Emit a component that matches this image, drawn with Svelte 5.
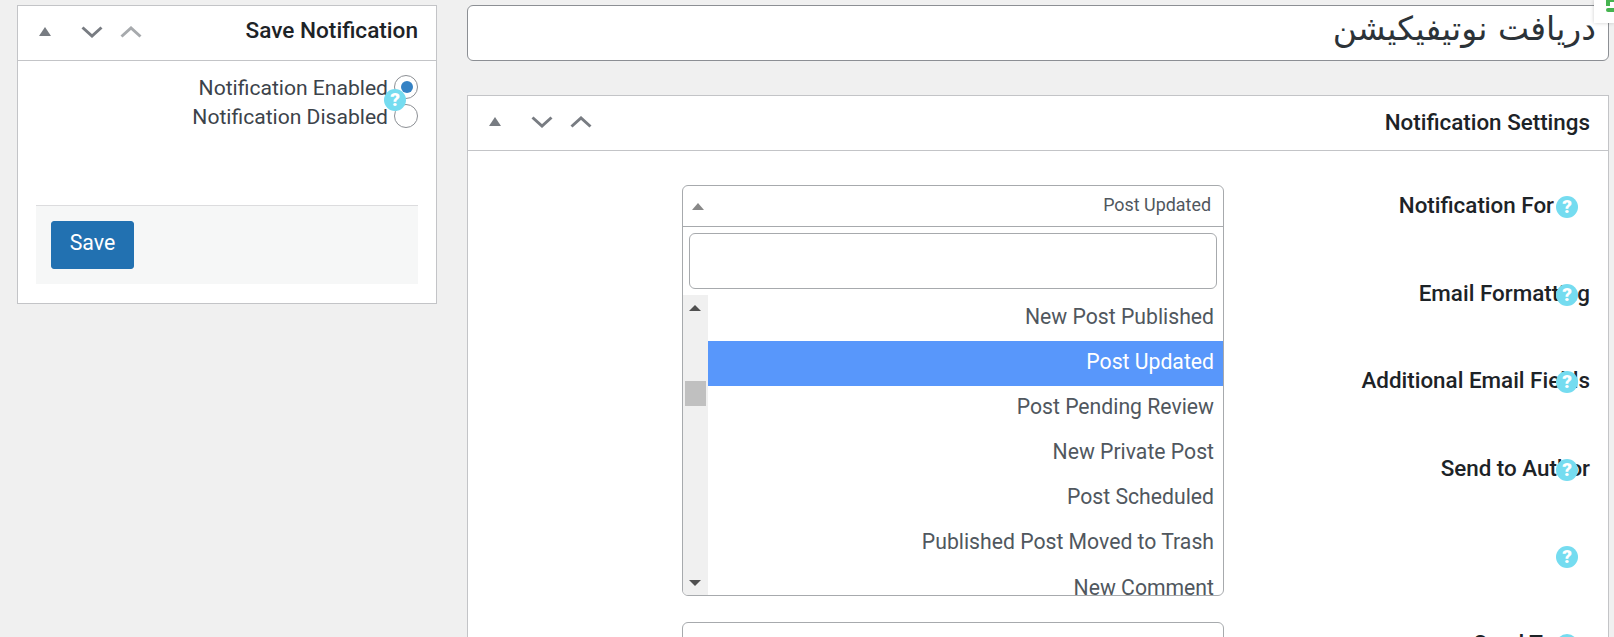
<script>
  const options = [
    { label: 'New Post Published' },
    { label: 'Post Updated', selected: true },
    { label: 'Post Pending Review' },
    { label: 'New Private Post' },
    { label: 'Post Scheduled' },
    { label: 'Published Post Moved to Trash' },
    { label: 'New Comment' }
  ];
  const fields = [
    { label: 'Notification For', inline: true },
    { label: 'Email Formatting' },
    { label: 'Additional Email Fields' },
    { label: 'Send to Author' },
    { label: '' },
    { label: 'Send To', inline: true }
  ];
</script>

{#snippet controls(muted)}
  <div class="controls">
    <svg class="tri" width="12" height="9" viewBox="0 0 12 9"><polygon points="6,0 12,9 0,9" fill="#787c82" /></svg>
    <svg class="chev down" width="22" height="12" viewBox="0 0 22 12"><polyline points="1.5,1.5 11,10 20.5,1.5" fill="none" stroke="#787c82" stroke-width="3" /></svg>
    <svg class="chev up" width="22" height="12" viewBox="0 0 22 12"><polyline points="1.5,10.5 11,2 20.5,10.5" fill="none" stroke={muted ? '#a7aaad' : '#787c82'} stroke-width="3" /></svg>
  </div>
{/snippet}

<div class="page">
  <aside class="side">
    <section class="card">
      <header class="head">
        {@render controls(true)}
        <h2>Save Notification</h2>
      </header>
      <div class="save-body">
        <div class="radios">
          <label class="radio-row">Notification Enabled<span class="radio on"></span></label>
          <label class="radio-row">Notification Disabled<span class="radio"></span></label>
          <span class="help radio-help">?</span>
        </div>
        <div class="actions">
          <button class="save">Save</button>
        </div>
      </div>
    </section>
  </aside>

  <main class="content">
    <div class="title-input" dir="rtl">دریافت نوتیفیکیشن</div>
    <section class="card settings">
      <header class="head">
        {@render controls(false)}
        <h2>Notification Settings</h2>
      </header>
      <div class="settings-body">
        <div class="fields-col">
          <div class="select">
            <div class="select-top">
              <svg width="12" height="7" viewBox="0 0 12 7"><polygon points="6,0 12,7 0,7" fill="#888" /></svg>
              <span>Post Updated</span>
            </div>
            <div class="search-wrap"><div class="search"></div></div>
            <div class="list">
              <div class="scrollbar">
                <svg class="arrow" width="12" height="6" viewBox="0 0 12 6"><polygon points="6,0 12,6 0,6" fill="#505050" /></svg>
                <div class="thumb"></div>
                <svg class="arrow bottom" width="12" height="6" viewBox="0 0 12 6"><polygon points="0,0 12,0 6,6" fill="#505050" /></svg>
              </div>
              <ul>
                {#each options as o}
                  <li class:selected={o.selected}>{o.label}</li>
                {/each}
              </ul>
            </div>
          </div>
          <div class="select next"></div>
        </div>
        <div class="labels-col">
          {#each fields as f}
            <div class="field" class:inline={f.inline}>
              <span>{f.label}</span>
              <span class="help">?</span>
            </div>
          {/each}
        </div>
      </div>
    </section>
  </main>

  <div class="corner">
    <span class="g1"></span>
    <span class="g2"></span>
    <span class="g3"></span>
  </div>
</div>

<style>
  :global(body) {
    margin: 0;
    background: #f0f0f0;
    font-family: Roboto, "Liberation Sans", sans-serif;
    overflow: hidden;
  }
  .page {
    position: relative;
    display: flex;
    height: 637px;
    overflow: hidden;
    padding: 5px 5px 0 17px;
    box-sizing: border-box;
    gap: 30px;
  }
  .side { width: 420px; flex: none; }
  .content { flex: 1; min-width: 0; }
  .card {
    background: #fff;
    border: 1px solid #c3c4c7;
    box-sizing: border-box;
  }
  .head {
    display: flex;
    justify-content: space-between;
    align-items: center;
    height: 55px;
    border-bottom: 1px solid #c3c4c7;
    padding: 0 18px 0 21px;
    box-sizing: border-box;
  }
  h2 {
    margin: 0 0 5px;
    font-size: 22.6px;
    font-weight: 500;
    color: #1d2327;
  }
  .settings h2 {
    margin-bottom: 3px;
    font-size: 22.4px;
  }
  .controls { display: flex; align-items: center; margin-bottom: 3px; }
  .chev.down { margin-left: 30px; }
  .chev.up { margin-left: 17px; }

  .save-body { padding: 11px 18px 19px; height: 242px; box-sizing: border-box; }
  .radios { position: relative; height: 133px; }
  .radio-row {
    display: flex;
    justify-content: flex-end;
    align-items: center;
    gap: 6px;
    height: 29px;
    padding-top: 2px;
    box-sizing: border-box;
    font-size: 21.1px;
    color: #3c434a;
  }
  .radio {
    width: 24px;
    height: 24px;
    margin-top: -2px;
    box-sizing: border-box;
    border: 1px solid #8c8f94;
    border-radius: 50%;
    background: #fff;
    flex: none;
    position: relative;
  }
  .radio.on::after {
    content: '';
    position: absolute;
    left: 6px;
    top: 5px;
    width: 12px;
    height: 12px;
    border-radius: 50%;
    background: #3582c4;
  }
  .help {
    width: 22px;
    height: 22px;
    border-radius: 50%;
    background: #75dcf0;
    color: #fff;
    font-size: 19px;
    font-weight: 900;
    line-height: 22px;
    text-align: center;
    display: block;
  }
  .radio-help { position: absolute; right: 12px; top: 17px; }
  .actions {
    background: #f6f7f7;
    border-top: 1px solid #dcdcde;
    height: 79px;
    padding: 15px;
    box-sizing: border-box;
  }
  .save {
    display: block;
    width: 83px;
    height: 48px;
    padding: 0 0 6px;
    border: 1px solid #2271b1;
    border-radius: 3px;
    background: #2271b1;
    color: #fff;
    font: 400 21.3px Roboto, sans-serif;
  }

  .title-input {
    height: 56px;
    background: #fff;
    border: 1px solid #8c8f94;
    border-radius: 6px;
    box-sizing: border-box;
    font: 400 33px/46px "DejaVu Sans", sans-serif;
    color: #2c3338;
    padding: 0 12px;
  }
  .settings { margin-top: 34px; height: 600px; }
  .settings-body { display: flex; padding-top: 34px; }
  .fields-col { width: 542px; margin-left: 214px; flex: none; }
  .select {
    width: 542px;
    height: 411px;
    border: 1px solid #a7aaad;
    border-radius: 6px;
    box-sizing: border-box;
    overflow: hidden;
    background: #fff;
  }
  .select.next { margin-top: 26px; height: 60px; }
  .select-top {
    height: 41px;
    border-bottom: 1px solid #a7aaad;
    display: flex;
    justify-content: space-between;
    align-items: center;
    padding: 0 12px 3px 9px;
    box-sizing: border-box;
    font-size: 17.9px;
    color: #50575e;
  }
  .select-top svg { margin-top: 4px; }
  .search-wrap { padding: 6px; }
  .search {
    height: 56px;
    border: 1px solid #a7aaad;
    border-radius: 6px;
    box-sizing: border-box;
  }
  .list { display: flex; height: 301px; }
  .scrollbar {
    position: relative;
    width: 25px;
    flex: none;
    background: #f0f0f0;
  }
  .arrow { position: absolute; left: 6px; top: 10px; }
  .arrow.bottom { top: auto; bottom: 10px; }
  .thumb {
    position: absolute;
    left: 2px;
    top: 86px;
    width: 21px;
    height: 25px;
    background: #c0c0c0;
  }
  ul { list-style: none; margin: 0; padding: 0.5px 0 0; flex: 1; min-width: 0; }
  li {
    height: 45.2px;
    line-height: 42.5px;
    text-align: right;
    padding-right: 9px;
    font-size: 21.2px;
    color: #50575e;
  }
  li.selected { background: #5897fb; color: #fff; }

  .labels-col { flex: 1; padding: 0 18px 0 0; margin-top: -1px; }
  .field {
    position: relative;
    height: 87.5px;
    line-height: 26px;
    text-align: right;
    font-size: 22.4px;
    font-weight: 500;
    color: #1d2327;
    padding-top: 8px;
    box-sizing: border-box;
  }
  .field.inline { padding-right: 36px; }
  .field .help {
    position: absolute;
    right: 12px;
    top: 12px;
    font-weight: 900;
  }
  .corner {
    position: absolute;
    right: 0;
    top: 0;
    width: 20px;
    height: 23px;
    background: #fff;
    box-shadow: 0 0 4px rgba(0, 0, 0, 0.2);
  }
  .g1, .g2, .g3 { position: absolute; background: #46b450; }
  .g1 { right: 0; top: 0; width: 6px; height: 2px; }
  .g2 { left: 12px; top: 0; width: 4px; height: 6px; }
  .g3 { left: 12px; top: 8px; width: 8px; height: 4px; border-radius: 2px 0 0 2px; }
</style>
